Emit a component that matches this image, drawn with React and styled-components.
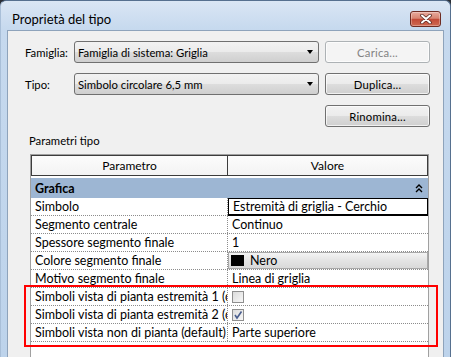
import React from 'react';
import styled, { createGlobalStyle } from 'styled-components';

const UI = '"Lato", "Liberation Sans", sans-serif';

const Global = createGlobalStyle`
  html, body { margin: 0; padding: 0; background: #2a2f36; }
  body { width: 451px; height: 357px; overflow: hidden; }
  * { box-sizing: border-box; }
`;

const Window = styled.div`
  position: relative;
  width: 451px;
  height: 357px;
  display: flex;
  flex-direction: column;
  padding: 0 6px;
  background: linear-gradient(#dae6f4, #c6d9ee 28px, #bdd3eb);
  border: 1px solid #56708f;
  border-left-color: #a9bfd8;
  border-bottom: none;
  border-radius: 6px 6px 0 0;
  overflow: hidden;
  font-family: ${UI};
  color: #000;
`;

const TitleBar = styled.div`
  flex: none;
  height: 29px;
  display: flex;
  align-items: flex-start;
  justify-content: space-between;
  padding: 10px 3px 0 5px;
`;

const Title = styled.span`
  font-size: 13px;
  line-height: 16px;
  color: #000;
`;

const CloseBtn = styled.div`
  width: 31px;
  height: 16px;
  border: 1px solid #6e2c23;
  border-radius: 3px;
  background: linear-gradient(#e8aa9d, #d88572 45%, #c24a37 52%, #cf6a52);
  box-shadow: inset 0 0 0 1px rgba(255, 255, 255, 0.3);
  display: flex;
  align-items: center;
  justify-content: center;
`;

const Client = styled.div`
  flex: 1;
  display: flex;
  flex-direction: column;
  align-items: flex-start;
  background: #f0f0f0;
  border: 1px solid #8ea3bb;
  border-bottom: none;
  padding: 10px 13px 0 17px;
  font-size: 11.3px;
`;

const FieldRow = styled.div`
  display: flex;
  align-items: center;
  align-self: stretch;
  height: 22px;
  margin-bottom: ${(p) => p.$gap ?? 10}px;
  justify-content: ${(p) => (p.$end ? 'flex-end' : 'flex-start')};
`;

const Label = styled.span`
  width: 49px;
  flex: none;
`;

const Combo = styled.div`
  width: 245px;
  height: 22px;
  flex: none;
  display: flex;
  align-items: center;
  justify-content: space-between;
  padding: 0 5px 0 3px;
  border: 1px solid #707070;
  border-radius: 3px;
  background: linear-gradient(#f2f2f2, #ebebeb 50%, #dddddd 51%, #cfcfcf);
`;

const Arrow = styled.span`
  width: 0;
  height: 0;
  border-left: 3.5px solid transparent;
  border-right: 3.5px solid transparent;
  border-top: 4px solid #000;
`;

const Button = styled.div`
  width: 105px;
  height: 22px;
  flex: none;
  margin-left: ${(p) => (p.$end ? 0 : 6)}px;
  display: flex;
  align-items: center;
  justify-content: center;
  letter-spacing: 0.2px;
  border: 1px solid ${(p) => (p.$disabled ? '#adb2b5' : '#707070')};
  border-radius: 3px;
  color: ${(p) => (p.$disabled ? '#838383' : '#000')};
  background: ${(p) =>
    p.$disabled
      ? '#f4f4f4'
      : 'linear-gradient(#f2f2f2, #ebebeb 50%, #dddddd 51%, #cfcfcf)'};
  box-shadow: inset 0 0 0 1px rgba(255, 255, 255, 0.7);
`;

const SectionLabel = styled.div`
  margin: 6px 0 0 4px;
  line-height: 15px;
`;

const Table = styled.div`
  margin: 6px 0 0 5px;
  width: 399px;
  flex: 1;
  background: #fff;
  border: 1px solid #a0a0a0;
  border-bottom: none;
  font-size: 12.5px;
`;

const HeaderRow = styled.div`
  display: flex;
  height: 21px;
  border: 1px solid #3c3c3c;
  background: linear-gradient(#fcfcfc, #f3f3f3);
  font-size: 12px;
`;

const HeaderCell = styled.div`
  width: ${(p) => (p.$first ? '196px' : 'auto')};
  flex: ${(p) => (p.$first ? 'none' : 1)};
  display: flex;
  align-items: center;
  justify-content: center;
  border-right: ${(p) => (p.$first ? '1px solid #3c3c3c' : 'none')};
`;

const GroupRow = styled.div`
  margin-top: 2px;
  height: 20px;
  display: flex;
  align-items: center;
  justify-content: space-between;
  padding: 0 5px 0 4px;
  background: #9db6d3;
  font-weight: 700;
`;

const Row = styled.div`
  display: flex;
  height: 18px;
  border-bottom: 1px dotted #8c8c8c;
`;

const NameCell = styled.div`
  width: 197px;
  flex: none;
  padding-left: 4px;
  line-height: 17px;
  white-space: nowrap;
  overflow: hidden;
  border-right: 1px dotted #8c8c8c;
`;

const ValueCell = styled.div`
  flex: 1;
  display: flex;
  align-items: center;
  gap: 6px;
  padding-left: ${(p) => (p.$swatch ? 2 : 4)}px;
  margin-bottom: ${(p) => (p.$selected ? '-1px' : 0)};
  border: ${(p) =>
    p.$selected ? '1px solid #000' : p.$swatch ? '1px solid #a8a8a8' : 'none'};
  border-bottom-width: ${(p) => (p.$selected ? '2px' : p.$swatch ? '1px' : 0)};
  background: ${(p) =>
    p.$swatch ? 'linear-gradient(#f4f4f4, #e4e4e4 50%, #d9d9d9)' : 'transparent'};
  white-space: nowrap;
`;

const Swatch = styled.span`
  width: 13px;
  height: 11px;
  background: #000;
  flex: none;
`;

const Check = styled.span`
  width: 12px;
  height: 12px;
  border: 1px solid #8f8f8f;
  background: linear-gradient(135deg, #dcdcdc, #f7f7f7);
  display: flex;
  align-items: center;
  justify-content: center;
`;

const Highlight = styled.div`
  position: absolute;
  left: 23px;
  top: 284px;
  width: 414px;
  height: 62px;
  border: 2px solid #f00;
  pointer-events: none;
`;

const rows = [
  { name: 'Simbolo', value: 'Estremità di griglia - Cerchio', selected: true },
  { name: 'Segmento centrale', value: 'Continuo' },
  { name: 'Spessore segmento finale', value: '1' },
  { name: 'Colore segmento finale', value: 'Nero', swatch: true },
  { name: 'Motivo segmento finale', value: 'Linea di griglia' },
  { name: 'Simboli vista di pianta estremità 1 (default)', check: false },
  { name: 'Simboli vista di pianta estremità 2 (default)', check: true },
  { name: 'Simboli vista non di pianta (default)', value: 'Parte superiore' },
];

export default function App() {
  return (
    <>
      <Global />
      <Window>
        <TitleBar>
          <Title>Proprietà del tipo</Title>
          <CloseBtn>
            <svg width="14" height="10" viewBox="0 0 14 10">
              <path
                d="M3 1.5 L11 8.5 M11 1.5 L3 8.5"
                stroke="#5a2a24"
                strokeWidth="3.6"
                strokeLinecap="round"
              />
              <path
                d="M3 1.5 L11 8.5 M11 1.5 L3 8.5"
                stroke="#fff"
                strokeWidth="2"
                strokeLinecap="round"
              />
            </svg>
          </CloseBtn>
        </TitleBar>
        <Client>
          <FieldRow>
            <Label>Famiglia:</Label>
            <Combo>
              <span>Famiglia di sistema: Griglia</span>
              <Arrow />
            </Combo>
            <Button $disabled>Carica...</Button>
          </FieldRow>
          <FieldRow>
            <Label>Tipo:</Label>
            <Combo>
              <span>Simbolo circolare 6,5 mm</span>
              <Arrow />
            </Combo>
            <Button>Duplica...</Button>
          </FieldRow>
          <FieldRow $end $gap={0}>
            <Button $end>Rinomina...</Button>
          </FieldRow>
          <SectionLabel>Parametri tipo</SectionLabel>
          <Table>
            <HeaderRow>
              <HeaderCell $first>Parametro</HeaderCell>
              <HeaderCell>Valore</HeaderCell>
            </HeaderRow>
            <GroupRow>
              <span>Grafica</span>
              <svg width="8" height="9" viewBox="0 0 8 9">
                <path
                  d="M1 4 L4 1 L7 4 M1 8 L4 5 L7 8"
                  fill="none"
                  stroke="#000"
                  strokeWidth="1.4"
                />
              </svg>
            </GroupRow>
            {rows.map((r) => (
              <Row key={r.name}>
                <NameCell>{r.name}</NameCell>
                <ValueCell $selected={r.selected} $swatch={r.swatch}>
                  {r.swatch && <Swatch />}
                  {r.check !== undefined ? (
                    <Check>
                      {r.check && (
                        <svg width="10" height="10" viewBox="0 0 10 10">
                          <path
                            d="M2 5 L4 8 L8.5 1.5"
                            fill="none"
                            stroke="#4a5e8e"
                            strokeWidth="1.6"
                          />
                        </svg>
                      )}
                    </Check>
                  ) : (
                    <span>{r.value}</span>
                  )}
                </ValueCell>
              </Row>
            ))}
          </Table>
        </Client>
        <Highlight />
      </Window>
    </>
  );
}
